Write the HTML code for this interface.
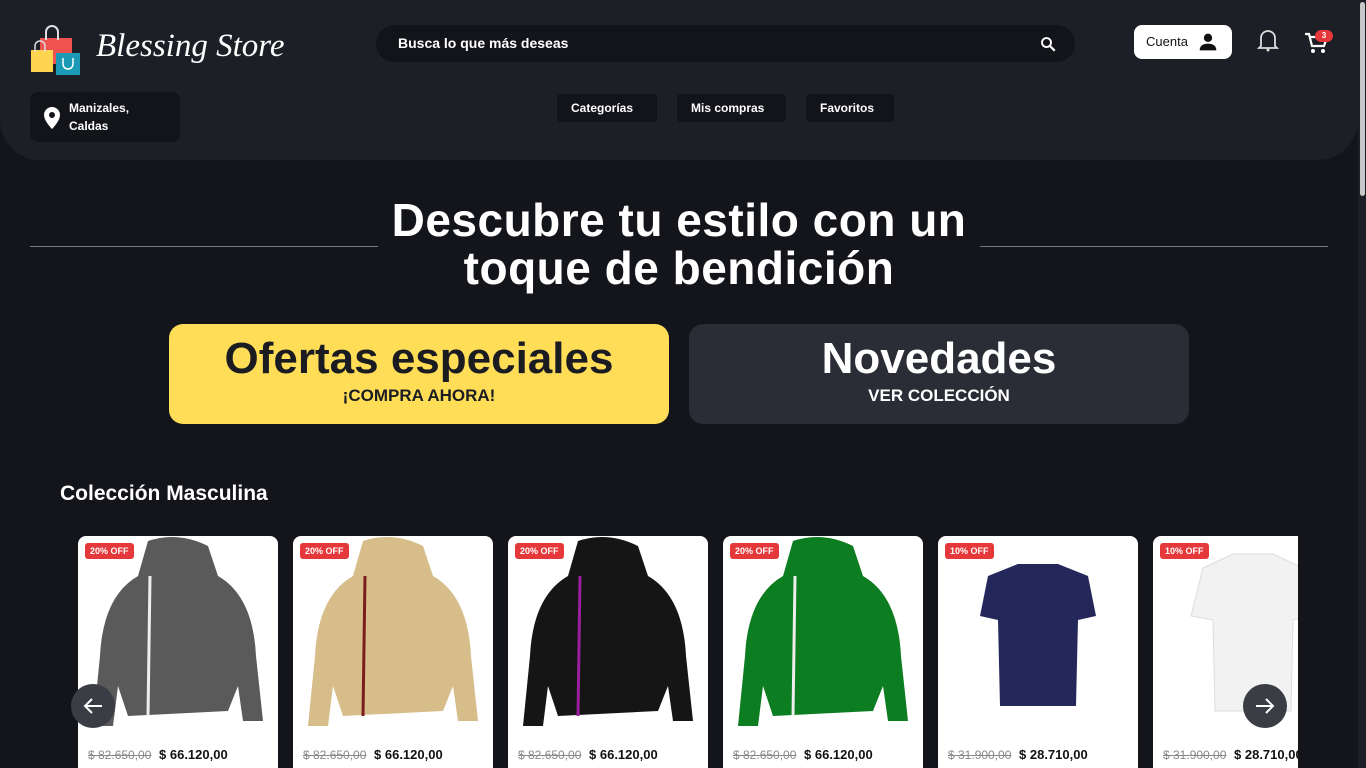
<!DOCTYPE html>
<html><head><meta charset="utf-8"><style>
*{margin:0;padding:0;box-sizing:border-box}
body{width:1366px;height:768px;overflow:hidden;background:#13151b;font-family:"Liberation Sans",sans-serif;color:#fff;position:relative}
.hdr{position:absolute;left:0;top:0;width:1358px;height:160px;background:#1c1f26;border-radius:0 0 40px 40px}
.search{position:absolute;left:376px;top:25px;width:699px;height:37px;background:#121419;border-radius:19px;font-size:14px;font-weight:bold;padding:10px 22px;color:#fff}
.cuenta{position:absolute;left:1134px;top:25px;width:98px;height:34px;background:#fff;border-radius:8px;color:#111;font-size:13px;padding:9px 12px}
.loc{position:absolute;left:30px;top:92px;width:150px;height:50px;background:#121419;border-radius:8px;font-size:12px;font-weight:bold;line-height:18px;padding:7px 0 0 39px}
.nav{position:absolute;top:94px;height:28px;background:#121419;border-radius:4px;font-size:12px;font-weight:bold;padding:7px 14px}
h1{position:absolute;left:378px;top:196px;width:602px;text-align:center;font-size:46px;line-height:48px;font-weight:bold;letter-spacing:0.5px}
.line{position:absolute;top:246px;height:1px;background:#777}
.bn{position:absolute;top:324px;width:500px;height:100px;border-radius:14px;text-align:center}
.bn b{display:block;font-size:44px;line-height:42px;margin-top:14px}
.bn span{display:block;font-size:17px;font-weight:bold;margin-top:6px}
.card{position:absolute;top:536px;width:200px;height:240px;background:#fff;border-radius:8px;overflow:hidden}
.tag{position:absolute;left:7px;top:7px;background:#e5383b;color:#fff;font-size:9px;font-weight:bold;padding:3px 5px;border-radius:3px}
.price{position:absolute;left:10px;top:211px;font-size:13px;font-weight:bold;color:#111;white-space:nowrap}
.price s{color:#888;font-weight:normal;font-size:12px;margin-right:4px}
.arr{position:absolute;top:684px;width:44px;height:44px;border-radius:50%;background:#3a3d44}
</style></head><body>
<div class="hdr"></div>
<svg style="position:absolute;left:29px;top:24px" width="52" height="52" viewBox="0 0 52 52"><rect x="11" y="14" width="32" height="26" fill="#ef5350"/><path d="M17 16 V8 a6 6 0 0 1 12 0 V16" fill="none" stroke="#ddd" stroke-width="2"/><rect x="2" y="26" width="22" height="22" fill="#ffd54f"/><path d="M6 28 V22 a5 5 0 0 1 10 0 V28" fill="none" stroke="#ddd" stroke-width="1.5"/><rect x="27" y="29" width="24" height="22" fill="#1b9ab5"/><path d="M34 34 v6 a5 5 0 0 0 10 0 v-6" fill="none" stroke="#fff" stroke-width="1.5"/></svg>
<div style="position:absolute;left:96px;top:28px;font-family:'Liberation Serif',serif;font-style:italic;font-size:33px;color:#fff">Blessing Store</div>
<div class="search">Busca lo que más deseas</div>
<svg style="position:absolute;left:1039px;top:35px" width="18" height="18" viewBox="0 0 24 24"><circle cx="10" cy="10" r="6" fill="none" stroke="#fff" stroke-width="2.5"/><path d="M14.5 14.5 L21 21" stroke="#fff" stroke-width="3"/></svg>
<div class="cuenta">Cuenta</div>
<svg style="position:absolute;left:1198px;top:32px" width="20" height="20" viewBox="0 0 24 24"><circle cx="12" cy="7" r="5" fill="#111"/><path d="M2 22 c0-6 5-8 10-8 s10 2 10 8z" fill="#111"/></svg>
<svg style="position:absolute;left:1257px;top:28px" width="22" height="24" viewBox="0 0 22 24"><path d="M4 18 V10 a7 7 0 0 1 14 0 V18 L20 20 H2 Z" fill="none" stroke="#ddd" stroke-width="1.8"/><circle cx="11" cy="22" r="1.5" fill="#ddd"/></svg>
<svg style="position:absolute;left:1304px;top:32px" width="24" height="22" viewBox="0 0 24 22"><path d="M1 2 H5 L8 14 H20 L23 5 H6" fill="none" stroke="#fff" stroke-width="2.2"/><circle cx="9" cy="19" r="2" fill="#fff"/><circle cx="19" cy="19" r="2" fill="#fff"/></svg>
<div style="position:absolute;left:1315px;top:30px;width:18px;height:12px;background:#e5383b;border-radius:6px;font-size:8px;font-weight:bold;text-align:center;line-height:12px">3</div>
<div class="loc">Manizales,<br>Caldas</div>
<svg style="position:absolute;left:44px;top:107px" width="16" height="22" viewBox="0 0 16 22"><path d="M8 0 a8 8 0 0 1 8 8 c0 6-8 14-8 14 S0 14 0 8 a8 8 0 0 1 8-8z" fill="#fff"/><circle cx="8" cy="8" r="3" fill="#121419"/></svg>
<div class="nav" style="left:557px;width:100px">Categorías</div>
<div class="nav" style="left:677px;width:109px">Mis compras</div>
<div class="nav" style="left:806px;width:88px">Favoritos</div>
<div class="line" style="left:30px;width:348px"></div>
<div class="line" style="left:980px;width:348px"></div>
<h1>Descubre tu estilo con un toque de bendición</h1>
<div class="bn" style="left:169px;background:#ffdd57;color:#1a1c22"><b>Ofertas especiales</b><span>¡COMPRA AHORA!</span></div>
<div class="bn" style="left:689px;background:#2a2d35"><b>Novedades</b><span>VER COLECCIÓN</span></div>
<div style="position:absolute;left:60px;top:482px;font-size:21px;font-weight:bold">Colección Masculina</div>
<div style="position:absolute;left:0;top:536px;width:1298px;height:232px;overflow:hidden">
<div class="card" style="left:78px;top:0"><svg width="200" height="200" viewBox="0 0 200 200"><path d="M70 5 Q100 -5 130 10 L140 40 Q175 60 178 120 L185 185 L165 185 L160 150 L150 175 L50 180 L40 150 L35 190 L15 190 L22 120 Q25 60 60 40Z" fill="#5a5a5a"/><path d="M72 40 L70 180" stroke="#eee" stroke-width="3"/></svg><div class="tag">20% OFF</div><div class="price"><s>$ 82.650,00</s> $ 66.120,00</div></div>
<div class="card" style="left:293px;top:0"><svg width="200" height="200" viewBox="0 0 200 200"><path d="M70 5 Q100 -5 130 10 L140 40 Q175 60 178 120 L185 185 L165 185 L160 150 L150 175 L50 180 L40 150 L35 190 L15 190 L22 120 Q25 60 60 40Z" fill="#d6bd8a"/><path d="M72 40 L70 180" stroke="#7a1c1c" stroke-width="3"/></svg><div class="tag">20% OFF</div><div class="price"><s>$ 82.650,00</s> $ 66.120,00</div></div>
<div class="card" style="left:508px;top:0"><svg width="200" height="200" viewBox="0 0 200 200"><path d="M70 5 Q100 -5 130 10 L140 40 Q175 60 178 120 L185 185 L165 185 L160 150 L150 175 L50 180 L40 150 L35 190 L15 190 L22 120 Q25 60 60 40Z" fill="#151515"/><path d="M72 40 L70 180" stroke="#9b1fa0" stroke-width="3"/></svg><div class="tag">20% OFF</div><div class="price"><s>$ 82.650,00</s> $ 66.120,00</div></div>
<div class="card" style="left:723px;top:0"><svg width="200" height="200" viewBox="0 0 200 200"><path d="M70 5 Q100 -5 130 10 L140 40 Q175 60 178 120 L185 185 L165 185 L160 150 L150 175 L50 180 L40 150 L35 190 L15 190 L22 120 Q25 60 60 40Z" fill="#0d7d22"/><path d="M72 40 L70 180" stroke="#eee" stroke-width="3"/></svg><div class="tag">20% OFF</div><div class="price"><s>$ 82.650,00</s> $ 66.120,00</div></div>
<div class="card" style="left:938px;top:0"><svg width="200" height="200" viewBox="0 0 200 200"><path d="M80 28 L120 28 L150 40 L158 80 L140 84 L138 170 L62 170 L60 84 L42 80 L50 40Z" fill="#23275a"/></svg><div class="tag">10% OFF</div><div class="price"><s>$ 31.900,00</s> $ 28.710,00</div></div>
<div class="card" style="left:1153px;top:0"><svg width="200" height="200" viewBox="0 0 200 200"><path d="M80 18 L120 18 L150 32 L160 80 L140 84 L138 175 L62 175 L60 84 L38 80 L50 32Z" fill="#f2f2f2" stroke="#ddd"/></svg><div class="tag">10% OFF</div><div class="price"><s>$ 31.900,00</s> $ 28.710,00</div></div>
</div>
<div class="arr" style="left:71px"><svg width="44" height="44" viewBox="0 0 44 44"><path d="M31 22 H14 M21 15 L14 22 L21 29" fill="none" stroke="#fff" stroke-width="2"/></svg></div>
<div class="arr" style="left:1243px"><svg width="44" height="44" viewBox="0 0 44 44"><path d="M13 22 H30 M23 15 L30 22 L23 29" fill="none" stroke="#fff" stroke-width="2"/></svg></div>
<div style="position:absolute;left:1358px;top:0;width:8px;height:768px;background:#1c1f26"></div>
<div style="position:absolute;left:1360px;top:2px;width:5px;height:194px;background:#c8c8c8;border-radius:3px"></div>
</body></html>
